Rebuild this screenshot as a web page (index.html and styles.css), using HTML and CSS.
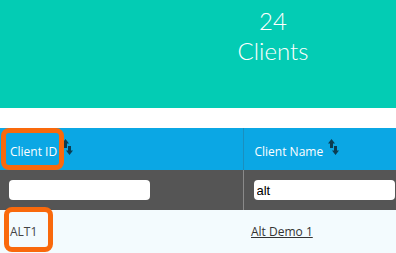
FILE: index.html
```html
<!DOCTYPE html>
<html lang="en">
<head>
  <meta charset="UTF-8" />
  <title>Clients</title>
  <link rel="stylesheet" href="styles.css">
</head>
<body>
  <div class="summary">
    <div class="count">24</div>
    <div class="label">Clients</div>
  </div>

  <table class="clients">
    <thead>
      <tr class="head-row">
        <th class="col-id">Client ID<svg class="sort" width="11" height="16" viewBox="0 0 11 16"><path d="M3.5 0 L0 4.5 L2 4.5 L2 9 L5 9 L5 4.5 L7 4.5 Z"/><path d="M7.5 16 L4 11.5 L6 11.5 L6 7 L9 7 L9 11.5 L11 11.5 Z"/></svg></th>
        <th>Client Name<svg class="sort" width="11" height="16" viewBox="0 0 11 16"><path d="M3.5 0 L0 4.5 L2 4.5 L2 9 L5 9 L5 4.5 L7 4.5 Z"/><path d="M7.5 16 L4 11.5 L6 11.5 L6 7 L9 7 L9 11.5 L11 11.5 Z"/></svg></th>
      </tr>
      <tr class="filter-row">
        <td class="col-id"><input type="text" class="filter" value=""></td>
        <td><input type="text" class="filter" value="alt"></td>
      </tr>
    </thead>
    <tbody>
      <tr class="data-row">
        <td class="col-id">ALT1</td>
        <td><a href="#">Alt Demo 1</a></td>
      </tr>
    </tbody>
  </table>

  <div class="mark mark-head"></div>
  <div class="mark mark-cell"></div>
</body>
</html>
```

FILE: styles.css
```css
body {
  margin: 0;
  font-family: 'Open Sans', sans-serif;
  background: #fff;
  overflow: hidden;
}

.summary {
  background: #03ccb4;
  height: 108px;
  box-sizing: border-box;
  padding: 6px 0 0 150px;
  text-align: center;
  color: #fff;
  font-family: 'Lato', sans-serif;
  font-weight: 300;
  font-size: 24px;
  line-height: 30px;
  margin-bottom: 20px;
}

.clients {
  width: 396px;
  border-collapse: collapse;
  font-size: 12px;
}

.col-id {
  width: 243px;
  box-sizing: border-box;
  border-right: 1px solid #1a8fbf;
}

.head-row {
  background: #0ba7e4;
  height: 42px;
}

.head-row th {
  color: #fff;
  font-weight: normal;
  text-align: left;
  padding: 0 0 0 10px;
}

.head-row th:last-child {
  padding-left: 11px;
}

.sort {
  fill: #0c3d52;
  margin-left: 5px;
  vertical-align: 1px;
}

.filter-row {
  background: #555555;
  height: 40px;
}

.filter-row td {
  padding: 0 0 0 9px;
}

.filter-row .col-id {
  border-right-color: #8a8a8a;
}

.filter-row td:last-child {
  padding-left: 10px;
}

.filter {
  width: 141px;
  height: 20px;
  box-sizing: border-box;
  border: none;
  border-radius: 4px;
  background: #fff;
  padding: 0 3px;
  font-family: 'Liberation Sans', sans-serif;
  font-size: 13px;
  color: #000;
  display: block;
}

.data-row {
  background: #f3fbfe;
  height: 48px;
}

.data-row td {
  color: #444;
  padding: 0 0 6px 10px;
}

.data-row .col-id {
  border-right: none;
}

.data-row a {
  color: #333;
  margin-left: -2px;
}

.mark {
  position: absolute;
  border: 5px solid #f9690c;
  border-radius: 8px;
  box-sizing: border-box;
}

.mark-head {
  left: 1px;
  top: 128px;
  width: 63px;
  height: 42px;
}

.mark-cell {
  left: 4px;
  top: 207px;
  width: 49px;
  height: 45px;
}
```
